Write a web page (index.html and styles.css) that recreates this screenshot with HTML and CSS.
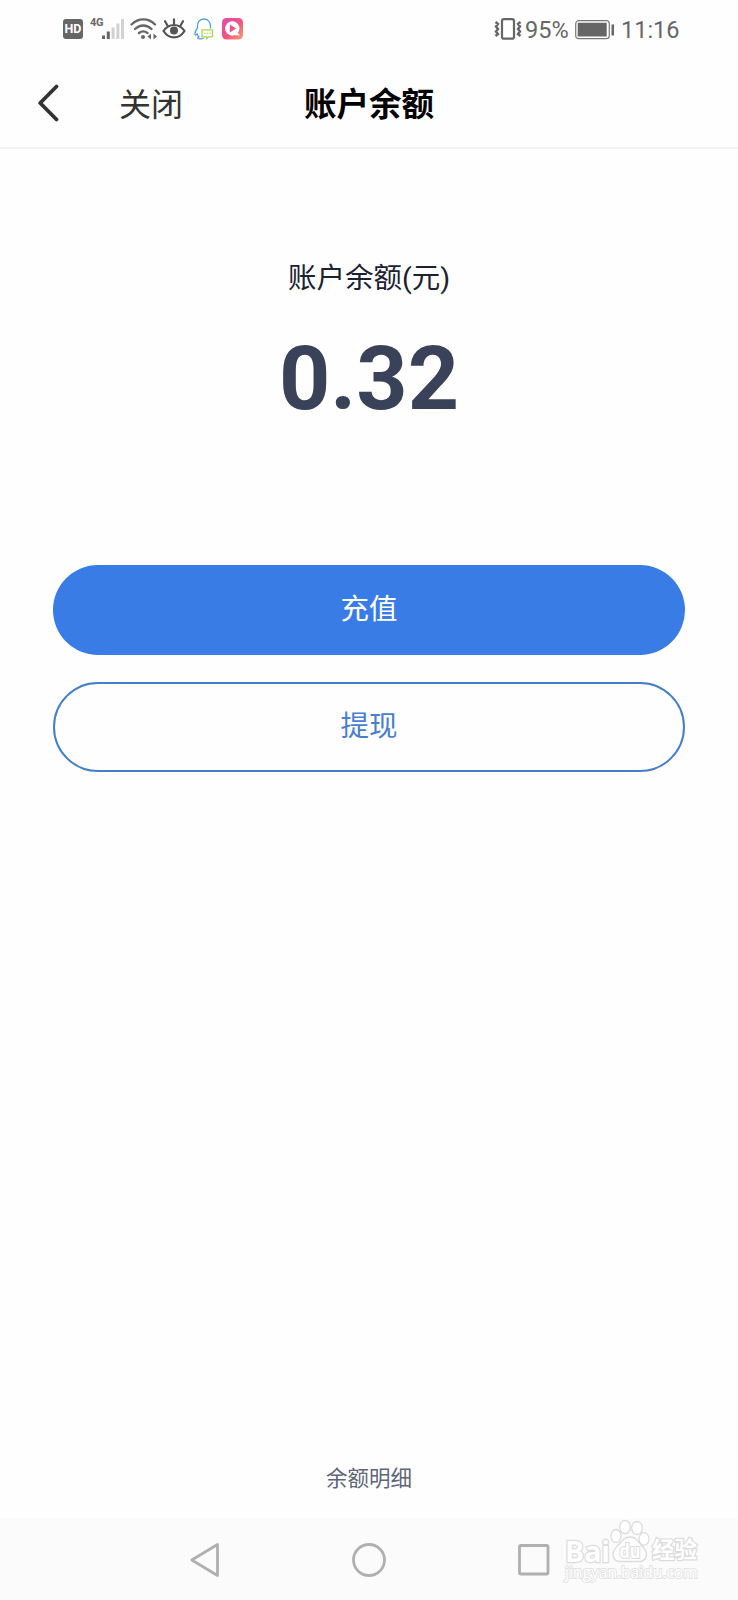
FILE: index.html
```html
<!DOCTYPE html>
<html lang="zh-CN">
<head>
<meta charset="utf-8">
<title>账户余额</title>
<link rel="stylesheet" href="styles.css">
</head>
<body>
<div class="screen">
  <div class="status">
    <div class="status-left">
      <span class="hd">HD</span>
      <span class="net">4G</span>
      <svg class="signal" width="22" height="20" viewBox="0 0 22 20">
        <path fill="#666" d="M0 16.500h3v3.500h-3zM4.800 12.500h3v7.500h-3z"/>
        <path fill="#d2d2d2" d="M9.600 8.500h3v11.500h-3zM14.400 4.500h3v15.500h-3zM19 0h3v20h-3z"/>
      </svg>
      <svg class="wifi" width="28" height="22" viewBox="0 0 28 22" fill="none" stroke="#666" stroke-width="2.300" stroke-linecap="round">
        <path d="M1.500 6.500C8.500-.3 18.500-.3 25 6.500M5 11c5-4.700 11.500-4.700 16.500 0M9 15c3-2.300 5.500-2.300 8.500 0"/>
        <circle cx="13" cy="19" r="2" fill="#666" stroke="none"/>
        <path d="M21 15.500v6l-3.500-3zM23.500 15.500v6l3.500-3z" fill="#666" stroke="none"/>
      </svg>
      <svg class="eye" width="24" height="22" viewBox="0 0 24 22" fill="none" stroke="#555" stroke-width="2.200" stroke-linecap="round">
        <path d="M1.500 13C7 5 17 5 22.500 13 17 21.500 7 21.500 1.500 13zM12 1.300v5M3 3.200l2.300 4M21 3.200l-2.300 4"/>
        <circle cx="12" cy="12.500" r="4" fill="#555" stroke="none"/>
      </svg>
      <svg class="qq" width="20" height="22" viewBox="0 0 20 22" fill="none" stroke-width="1.300" stroke-linejoin="round">
        <path stroke="#4da3e0" d="M16.500 10.500C17 4.500 14.500 1 10 1S3 4.500 3.500 10C1.500 12.500.5 15 1.200 17c.8.300 1.400-.5 2-1.200.3 1.300.8 2.200 1.800 3-2 1-1.500 2 1 2.100 1.800 0 3-.4 3.800-1"/>
        <path stroke="#a9d65a" fill="#fafdf0" d="M8 11.800h10.500v7h-4l-2 2.200v-2.200H8z"/>
        <path stroke="#c0df70" stroke-dasharray="1.400 1.300" d="M10 15.300h7"/>
      </svg>
      <svg class="video" width="21" height="22" viewBox="0 0 21 22">
        <defs><linearGradient id="pink" x1="0" y1="0" x2="1" y2="1"><stop offset="0" stop-color="#e04bae"/><stop offset=".55" stop-color="#f2557f"/><stop offset="1" stop-color="#fba06b"/></linearGradient></defs>
        <rect width="21" height="21.500" rx="4.500" fill="url(#pink)"/>
        <circle cx="10.300" cy="10.500" r="7.200" fill="#fff"/>
        <path d="M7.800 6.500l6.200 4-6.200 4z" fill="#ee5088"/>
        <path d="M14.500 14l3.500 3.200-5 .3z" fill="#fff"/>
      </svg>
    </div>
    <div class="status-right">
      <svg class="vibrate" width="28" height="22" viewBox="0 0 28 22" fill="none" stroke="#666">
        <rect x="8" y="1.200" width="12" height="19.500" rx="2" stroke-width="2.200"/>
        <path stroke-width="2.400" d="M1.500 4l2.500 2-2 2.500 2 2.500-2 2.500 2 2.500-2.500 2M26.500 4l-2.500 2 2 2.500-2 2.500 2 2.500-2 2.500 2.500 2"/>
      </svg>
      <span class="percent">95%</span>
      <svg class="battery" width="40" height="20" viewBox="0 0 40 20">
        <rect x=".7" y=".7" width="33.600" height="18" rx="3" fill="none" stroke="#777" stroke-width="1.200"/>
        <path fill="#666" d="M2.700 2.800h29v13.700h-29zM36.500 4.500h2.500v11h-2.500z"/>
      </svg>
      <span class="clock">11:16</span>
    </div>
  </div>

  <header class="header">
    <div class="header-left">
      <svg class="back" width="22" height="38" viewBox="0 0 22 38" fill="none" stroke="#333" stroke-width="3.800" stroke-linecap="round" stroke-linejoin="round"><path d="M18.500 2.500L2.200 19l16.300 16.500"/></svg>
      <span class="close">关闭</span>
    </div>
    <h1 class="title">账户余额</h1>
  </header>

  <main class="main">
    <p class="label">账户余额(元)</p>
    <p class="amount">0.32</p>
    <div class="actions">
      <button class="btn btn-primary">充值</button>
      <button class="btn btn-outline">提现</button>
    </div>
    <a class="detail">余额明细</a>
  </main>

  <nav class="nav">
    <svg width="30" height="36" viewBox="0 0 30 36" fill="none" stroke="#b0b0b0" stroke-width="2.800" stroke-linejoin="round"><path d="M27.500 2.500v31L1.800 18z"/></svg>
    <svg width="34" height="36" viewBox="0 0 34 36" fill="none" stroke="#b0b0b0" stroke-width="2.800"><circle cx="17" cy="18" r="15.500"/></svg>
    <svg width="32" height="36" viewBox="0 0 32 36" fill="none" stroke="#b0b0b0" stroke-width="2.800"><rect x="1.500" y="3.500" width="28.500" height="28.500" rx="1.500"/></svg>
  </nav>
  <div class="watermark">
    <div class="mark-row">
      <span class="mark-bai">Bai</span>
      <svg class="paw" width="40" height="44" viewBox="0 0 40 44" fill="#fff" stroke="#dcdcdc" stroke-width="1.300">
        <ellipse cx="6" cy="17" rx="5" ry="6.500"/><ellipse cx="15" cy="8" rx="5.300" ry="6.700"/><ellipse cx="27" cy="9" rx="5.300" ry="6.500"/><ellipse cx="34" cy="20" rx="5" ry="6.300"/>
        <path d="M20 18c7 0 8 5.500 12.500 9.500C39 33.500 37 42.500 29 42.500H10C2.500 42.500.5 33.500 7 27.500 11.500 23.500 13 18 20 18z"/>
        <text class="paw-text" x="20" y="38.500" text-anchor="middle" textLength="21" lengthAdjust="spacingAndGlyphs">du</text>
      </svg>
      <span class="mark-cn">经验</span>
    </div>
    <div class="mark-url">jingyan.baidu.com</div>
  </div>
</div>
</body>
</html>
```
FILE: styles.css
```css
* { box-sizing: border-box; }
body {
  margin: 0;
  background: #fefefe;
  font-family: Roboto, "Noto Sans CJK SC", sans-serif;
}
p, h1 { margin: 0; font-weight: 400; }
svg { display: block; flex: none; }
.screen {
  position: relative;
  display: flex;
  flex-direction: column;
  width: 738px;
  height: 1600px;
  overflow: hidden;
}
.status {
  display: flex;
  justify-content: space-between;
  height: 58px;
  padding: 18px 59px 0 63px;
  color: #666;
}
.status-left, .status-right { display: flex; align-items: flex-start; }
.hd {
  width: 20px;
  height: 20px;
  margin-top: 1px;
  border-radius: 3px;
  background: #666;
  color: #fff;
  font: 700 12.5px/20px Roboto, sans-serif;
  text-align: center;
}
.net {
  width: 13px;
  margin: -1px 0 0 7px;
  font: 700 11px/12px "Liberation Sans Narrow", Roboto, sans-serif;
  letter-spacing: -0.3px;
}
.signal { margin: 1px 0 0 -1px; }
.wifi { margin-left: 6px; }
.eye { margin-left: 4px; }
.qq { margin-left: 8px; }
.video { margin-left: 8px; }
.percent { width: 48px; margin-left: 3px; font-size: 23.5px; line-height: 24px; }
.battery { margin: 2px 0 0 2px; }
.clock { margin-left: 6px; width: 58px; font-size: 23.5px; line-height: 24px; white-space: nowrap; }
.header {
  display: grid;
  grid-template-columns: 1fr auto 1fr;
  align-items: center;
  height: 91px;
  padding-top: 4px;
  border-bottom: 2px solid #f2f2f2;
}
.header-left { display: flex; align-items: center; padding-left: 38px; }
.back { margin-top: -3px; }
.close { margin-left: 59px; color: #333; font-size: 32px; line-height: 40px; }
.title { color: #000; font-size: 32.5px; line-height: 40px; font-weight: 700; }
.main { display: flex; flex: 1; flex-direction: column; align-items: center; }
.label { margin-top: 110px; color: #1b2233; font-size: 28.5px; line-height: 40px; }
.amount { margin-top: 30px; color: #3a4259; font-size: 89.5px; font-weight: 700; line-height: 100px; }
.actions { display: flex; flex-direction: column; gap: 27px; width: 632px; margin-top: 136px; }
.btn {
  height: 90px;
  padding: 0 0 1px;
  border: 0;
  border-radius: 45px;
  font: 400 28.5px/40px Roboto, "Noto Sans CJK SC", sans-serif;
}
.btn-primary { background: #397ce5; color: #fff; }
.btn-outline { border: 2px solid #467fc9; background: transparent; color: #4a7fce; }
.detail { margin: auto 0 25px; color: #606678; font-size: 21.5px; line-height: 30px; }
.nav {
  display: flex;
  align-items: flex-start;
  gap: 132px;
  height: 81px;
  padding: 23px 0 0 190px;
  background: #fbfbfb;
}
.watermark { position: absolute; left: 565px; top: 1519px; width: 136px; color: #fff; font-family: "Open Sans", "Noto Sans CJK SC", sans-serif; }
.mark-row { display: flex; align-items: flex-end; height: 44px; }
.mark-bai, .mark-cn, .mark-url, .paw-text { paint-order: stroke fill; white-space: nowrap; }
.mark-bai, .mark-cn { -webkit-text-stroke: 2.4px #dcdcdc; font-weight: 700; }
.mark-bai { width: 45px; font-size: 28.5px; line-height: 28px; margin-bottom: -2px; }
.mark-cn { font-size: 22.5px; line-height: 26px; margin: 0 0 0 2px; }
.paw-text { font: 700 19px "Open Sans", sans-serif; stroke-width: 2.2px; }
.mark-url { font-size: 15.6px; line-height: 18px; -webkit-text-stroke: 1.8px #e2e2e2; }
```
